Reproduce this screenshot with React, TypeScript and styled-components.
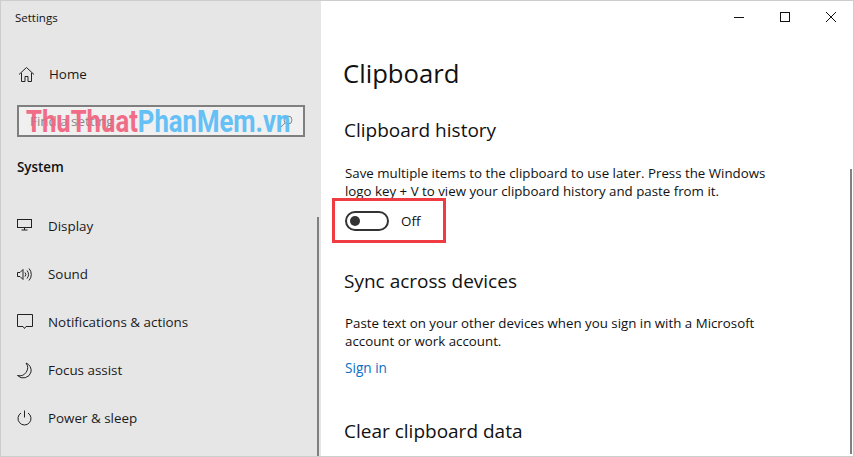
import React from "react";
import styled, { createGlobalStyle } from "styled-components";

const Global = createGlobalStyle`
  html, body { margin: 0; padding: 0; background: #fff; overflow: hidden; }
  * { box-sizing: border-box; }
`;

const Win = styled.div`
  position: relative;
  width: 854px;
  height: 457px;
  display: flex;
  overflow: hidden;
  background: #fff;
  border: 1px solid #cdcdcd;
  font-family: "Open Sans", "Noto Sans", sans-serif;
  color: #111;
`;

const Sidebar = styled.aside`
  position: relative;
  width: 320px;
  flex: none;
  background: #e6e6e6;
  display: flex;
  flex-direction: column;
`;

const AppTitle = styled.div`
  height: 33px;
  padding: 9px 0 0 14px;
  font-size: 11.5px;
  line-height: 16px;
`;

const NavRow = styled.div`
  height: 48px;
  display: flex;
  align-items: center;
  gap: 15px;
  padding-left: 15px;
  font-size: 13.4px;
  color: #1a1a1a;
`;

const HomeRow = styled(NavRow)`
  margin-top: 16px;
  padding-left: 17px;
  gap: 14px;
`;

const IconBox = styled.svg`
  width: 17px;
  height: 17px;
  flex: none;
  fill: none;
  stroke: #222;
  stroke-width: 1;
`;

const Search = styled.div`
  position: relative;
  margin: 7px 0 0 16px;
  width: 288px;
  height: 32px;
  border: 2px solid #7f7f7f;
  background: #f0f0f0;
  display: flex;
  align-items: center;
  padding: 0 10px 0 11px;
  justify-content: space-between;
  color: #888;
  font-size: 13.4px;
`;

const SearchIcon = styled.svg`
  width: 13px;
  height: 13px;
  flex: none;
  fill: none;
  stroke: #888;
  stroke-width: 1;
`;

const Watermark = styled.div`
  position: absolute;
  left: 7px;
  top: -2px;
  font-family: "Roboto", "Liberation Sans", sans-serif;
  font-weight: 700;
  font-size: 25.7px;
  line-height: 32px;
  white-space: nowrap;
  opacity: 0.92;
  transform: scaleY(1.22);
  transform-origin: center;
`;

const Pink = styled.span`
  color: #f2627f;
`;

const Blue = styled.span`
  color: #59bcf6;
`;

const SystemLabel = styled.div`
  margin: 21px 0 26px 16px;
  font-size: 13.4px;
  line-height: 18px;
  font-weight: 600;
  color: #111;
`;

const SideScroll = styled.div`
  position: absolute;
  right: 2px;
  top: 216px;
  bottom: 0;
  width: 2px;
  background: #808080;
`;

const Main = styled.main`
  position: relative;
  flex: 1;
  display: flex;
  flex-direction: column;
  padding-left: 23px;
`;

const Caption = styled.div`
  position: absolute;
  top: 0;
  right: -1px;
  display: flex;
`;

const CapBtn = styled.div`
  width: 46px;
  height: 32px;
  display: flex;
  align-items: center;
  justify-content: center;
`;

const CapIcon = styled.svg`
  width: 12px;
  height: 12px;
  fill: none;
  stroke: #111;
  stroke-width: 1;
`;

const Title = styled.h1`
  margin: 53px 0 0 -1px;
  font-size: 25.7px;
  line-height: 40px;
  font-weight: 400;
  color: #111;
`;

const H2 = styled.h2<{ $mt: number }>`
  margin: ${(p) => p.$mt}px 0 0;
  font-size: 19px;
  line-height: 28px;
  font-weight: 400;
  color: #111;
`;

const Para = styled.p<{ $mt: number }>`
  margin: ${(p) => p.$mt}px 0 0 1px;
  width: 440px;
  font-size: 13.3px;
  line-height: 18px;
  color: #111;
`;

const ToggleRow = styled.div`
  margin: 11px 0 0 1px;
  height: 20px;
  display: flex;
  align-items: center;
  gap: 12px;
  font-size: 13.4px;
`;

const Track = styled.div`
  width: 44px;
  height: 20px;
  border: 2px solid #333;
  border-radius: 10px;
  display: flex;
  align-items: center;
  padding-left: 3px;
`;

const Knob = styled.div`
  width: 10px;
  height: 10px;
  border-radius: 50%;
  background: #333;
`;

const Highlight = styled.div`
  position: absolute;
  left: 11px;
  top: 197px;
  width: 114px;
  height: 45px;
  border: 3px solid #ef3b42;
`;

const Link = styled.a`
  display: block;
  margin: 9px 0 0 1px;
  font-size: 13.6px;
  line-height: 18px;
  color: #0b6fc4;
`;

const MainScroll = styled.div`
  position: absolute;
  right: 1px;
  top: 168px;
  bottom: 2px;
  width: 2px;
  background: #808080;
`;

const items: [string, React.ReactNode][] = [
  ["Display", <><rect x="1.5" y="1.5" width="14" height="8" /><path d="M8.5 9.5v2.5M5.5 12h6" /></>],
  ["Sound", <><path d="M1.5 6.5h2.5l3-3v10l-3-3H1.5z" /><path d="M9 6.5a3 3 0 0 1 0 4M11 4.5a6 6 0 0 1 0 8M13 2.5a9 9 0 0 1 0 12" /></>],
  ["Notifications & actions", <path d="M1.5 .5h15v12H10l-1.5 2-1.5-2H1.5z" />],
  ["Focus assist", <path d="M10 1a8 8 0 0 1-8.5 12.5A8 8 0 0 0 15 10 8 8 0 0 0 10 1z" />],
  ["Power & sleep", <><path d="M8.5 .5v7" /><path d="M5 3a6.5 6.5 0 1 0 7 0" /></>],
];

export default function App() {
  return (
    <Win>
      <Global />
      <Sidebar>
        <AppTitle>Settings</AppTitle>
        <HomeRow>
          <IconBox viewBox="0 0 17 17">
            <path d="M1 8.5 8.5 1.5 16 8.5M3.5 7v8.5h3.5v-5h3v5h3.5V7" />
          </IconBox>
          Home
        </HomeRow>
        <Search>
          <span>Find a setting</span>
          <SearchIcon viewBox="0 0 13 13">
            <circle cx="8" cy="5" r="4" />
            <path d="M5 8 1 12" />
          </SearchIcon>
          <Watermark>
            <Pink>ThuThuat</Pink>
            <Blue>PhanMem.vn</Blue>
          </Watermark>
        </Search>
        <SystemLabel>System</SystemLabel>
        {items.map(([label, icon]) => (
          <NavRow key={label}>
            <IconBox viewBox="0 0 17 17">{icon}</IconBox>
            {label}
          </NavRow>
        ))}
        <SideScroll />
      </Sidebar>
      <Main>
        <Caption>
          <CapBtn>
            <CapIcon viewBox="0 0 12 12"><path d="M1 6.5h10" /></CapIcon>
          </CapBtn>
          <CapBtn>
            <CapIcon viewBox="0 0 12 12"><rect x="1.5" y="1.5" width="9" height="9" /></CapIcon>
          </CapBtn>
          <CapBtn>
            <CapIcon viewBox="0 0 12 12"><path d="M1 1l10 10M11 1 1 11" /></CapIcon>
          </CapBtn>
        </Caption>
        <Title>Clipboard</Title>
        <H2 $mt={22}>Clipboard history</H2>
        <Para $mt={20}>
          Save multiple items to the clipboard to use later. Press the Windows
          logo key + V to view your clipboard history and paste from it.
        </Para>
        <ToggleRow>
          <Track><Knob /></Track>
          Off
        </ToggleRow>
        <H2 $mt={36}>Sync across devices</H2>
        <Para $mt={19}>
          Paste text on your other devices when you sign in with a Microsoft
          account or work account.
        </Para>
        <Link>Sign in</Link>
        <H2 $mt={40}>Clear clipboard data</H2>
        <Highlight />
        <MainScroll />
      </Main>
    </Win>
  );
}
